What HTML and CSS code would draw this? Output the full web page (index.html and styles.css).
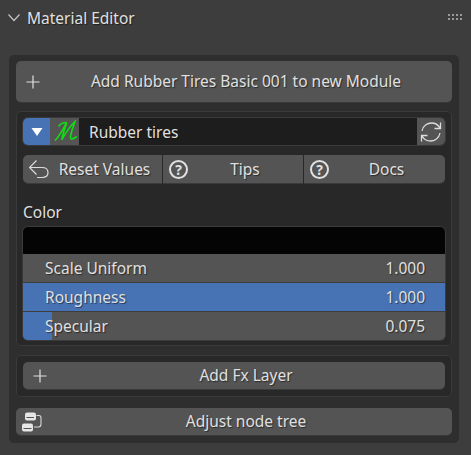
FILE: index.html
```html
<!DOCTYPE html>
<html lang="en">
<head>
    <meta charset="UTF-8">
    <title>Material Editor</title>
    <link rel="stylesheet" href="styles.css">
</head>
<body>
    <div class="panel">
        <div class="panel-header">
            <svg class="chevron" width="14" height="10" viewBox="0 0 14 10"><path d="M1.5 1.5 L7 7.5 L12.5 1.5" fill="none" stroke="#c4c4c4" stroke-width="1.2"/></svg>
            <span class="panel-title">Material Editor</span>
            <span class="grip"></span>
        </div>

        <div class="panel-body">
            <button class="btn btn-large">
                <svg class="btn-icon plus" width="14" height="14" viewBox="0 0 14 14"><path d="M7 0.5 V13.5 M0.5 7 H13.5" stroke="#e0e0e0" stroke-width="1.2"/></svg>
                Add Rubber Tires Basic 001 to new Module
            </button>

            <div class="box box-main">
                <div class="name-row">
                    <span class="toggle"><svg width="12" height="8" viewBox="0 0 12 8"><path d="M0.5 0 H11.5 L6 8 Z" fill="#fff"/></svg></span>
                    <span class="mat-icon">
                        <svg width="26" height="24" viewBox="0 0 26 24"><path d="M3 20.500 C7 17 11 9 14.800 2.500 C13 8 10.500 14 9.800 19.800 C13 14 18 6 23 1.500 C21 8 18.500 13 18.500 17.500 C18.500 20 21.500 19 24.800 16.500 M6.500 6.500 C8 4 11 2.500 14.800 2.500" fill="none" stroke="#12dc12" stroke-width="1.600"/></svg>
                    </span>
                    <span class="name-field">Rubber tires</span>
                    <span class="refresh">
                        <svg width="22" height="22" viewBox="0 0 22 22"><path d="M2 10 C3 4 8 2 11.500 2 C15 2 18 3.500 20 7 M20.500 1.500 V7.500 H14.500 M20 12 C19 18 14 20 10.500 20 C7 20 4 18.500 2 15 M1.500 20.500 V14.500 H7.500" fill="none" stroke="#dcdcdc" stroke-width="1.300"/></svg>
                    </span>
                </div>

                <div class="btn-row">
                    <button class="btn seg">
                        <svg class="reset-icon" width="20" height="20" viewBox="0 0 20 20"><path d="M7.500 1.500 L0.500 8.500 L7.500 15.500 M0.500 8.500 H13 C17 8.500 19 10.500 19 13.500 C19 16.500 17 18.500 13 18.500 H8" fill="none" stroke="#dcdcdc" stroke-width="1.200"/></svg>
                        Reset Values
                    </button>
                    <button class="btn seg">
                        <span class="help">?</span>
                        Tips
                    </button>
                    <button class="btn seg">
                        <span class="help">?</span>
                        Docs
                    </button>
                </div>

                <div class="color-label">Color</div>

                <div class="props">
                    <div class="swatch"></div>
                    <div class="slider">
                        <span>Scale Uniform</span><span>1.000</span>
                    </div>
                    <div class="slider slider-full">
                        <span>Roughness</span><span>1.000</span>
                    </div>
                    <div class="slider slider-part">
                        <span class="slider-fill" style="width: 6.9%"></span>
                        <span>Specular</span><span>0.075</span>
                    </div>
                </div>
            </div>

            <div class="box box-fx">
                <button class="btn btn-small">
                    <svg class="btn-icon plus" width="14" height="14" viewBox="0 0 14 14"><path d="M7 0.5 V13.5 M0.5 7 H13.5" stroke="#e0e0e0" stroke-width="1.2"/></svg>
                    Add Fx Layer
                </button>
            </div>

            <button class="btn btn-small btn-adjust">
                <svg class="btn-icon tree" width="20" height="20" viewBox="0 0 20 20">
                    <rect x="3" y="0.500" width="11" height="8" rx="2" fill="#e6e6e6"/>
                    <rect x="0" y="11.500" width="11" height="8" rx="2" fill="#e6e6e6"/>
                    <path d="M4.500 5.500 H12 M1.500 16.500 H9.500" stroke="#545454" stroke-width="1"/>
                    <path d="M14.500 3.500 H17 C18.500 3.500 19 4.500 19 6 V12 C19 14 18 15 16.500 15 H12" fill="none" stroke="#d8d8d8" stroke-width="1.100"/>
                </svg>
                Adjust node tree
            </button>
        </div>
    </div>
</body>
</html>
```

FILE: styles.css
```css
* {
    box-sizing: border-box;
}

body {
    margin: 0;
    width: 471px;
    height: 455px;
    overflow: hidden;
    background-color: #3d3d3d;
    font-family: "Noto Sans", sans-serif;
    font-size: 15.500px;
    color: #e0e0e0;
    text-shadow: 1px 1px 1px rgba(0, 0, 0, 0.5);
}

.panel-header {
    display: flex;
    align-items: center;
    height: 35px;
    padding: 0 9px 0 7px;
}

.chevron {
    margin-right: 6px;
}

.panel-title {
    flex: 1;
}

.grip {
    width: 14px;
    height: 6px;
    margin-top: -1px;
    background-image: conic-gradient(#9a9a9a 25%, transparent 0);
    background-position: -2px 0;
    background-size: 4px 4px;
}

.panel-body {
    display: flex;
    flex-direction: column;
    width: 450px;
    height: 388px;
    margin: 20px 0 0 9px;
    padding: 6px 7px;
    background-color: #2e2e2e;
    border-radius: 5px;
}

.btn {
    position: relative;
    display: flex;
    align-items: center;
    justify-content: center;
    width: 100%;
    padding: 0 0 1px 24px;
    border: none;
    border-radius: 5px;
    background-color: #545454;
    font: inherit;
    color: inherit;
    text-shadow: inherit;
    box-shadow: 0 1px 0 #3a3a3a;
}

.btn-large {
    height: 41px;
}

.btn-small {
    height: 27px;
}

.btn-icon {
    position: absolute;
    left: 10px;
    top: 50%;
    transform: translateY(-50%);
}

.box {
    background-color: #282828;
    border: 1px solid #3a3a3a;
    border-radius: 5px;
    padding: 6px;
}

.box-main {
    height: 235px;
    margin-top: 9px;
}

.box-fx {
    height: 42px;
    margin-top: 9px;
}

.btn-adjust {
    margin-top: 11px;
}

.btn-adjust .tree {
    left: 6px;
}

.name-row {
    display: flex;
    height: 27px;
    border-radius: 5px;
    box-shadow: 0 0 0 1px #3a3a3a;
}

.toggle {
    display: flex;
    align-items: center;
    justify-content: center;
    width: 27px;
    background-color: #4772b3;
    border-radius: 5px 0 0 5px;
}

.mat-icon {
    display: flex;
    align-items: center;
    justify-content: center;
    width: 29px;
    background-color: #545454;
}

.name-field {
    flex: 1;
    display: flex;
    align-items: center;
    padding-left: 10px;
    background-color: #1d1d1d;
}

.refresh {
    display: flex;
    align-items: center;
    justify-content: center;
    width: 28px;
    background-color: #545454;
    border-radius: 0 5px 5px 0;
}

.btn-row {
    display: flex;
    gap: 1px;
    height: 28px;
    margin-top: 10px;
}

.seg {
    flex: 0 0 140px;
    height: 28px;
    padding-bottom: 0;
    border-radius: 0;
}

.seg:first-child {
    flex-basis: 139px;
    border-radius: 5px 0 0 5px;
}

.seg:last-child {
    flex-basis: 141px;
    border-radius: 0 5px 5px 0;
}

.reset-icon {
    position: absolute;
    left: 6px;
    top: 4px;
}

.help {
    position: absolute;
    left: 6px;
    top: 5px;
    width: 19px;
    height: 19px;
    border: 2px solid #e0e0e0;
    border-radius: 50%;
    font-size: 14px;
    font-weight: bold;
    line-height: 15px;
    text-align: center;
    text-shadow: none;
}

.color-label {
    height: 24px;
    margin-top: 18px;
    margin-bottom: 2px;
}

.props {
    border-radius: 5px;
    overflow: hidden;
    background-color: #3d3d3d;
    box-shadow: 0 0 0 1px #3a3a3a;
}

.swatch {
    height: 27px;
    background-color: #040404;
}

.slider {
    position: relative;
    display: flex;
    justify-content: space-between;
    align-items: center;
    height: 28px;
    margin-bottom: 1px;
    padding: 0 20px 0 22px;
    background-color: #545454;
}

.slider:last-child {
    margin-bottom: 0;
}

.slider span {
    position: relative;
}

.slider-full {
    background-color: #4772b3;
}

.slider .slider-fill {
    position: absolute;
    left: 0;
    top: 0;
    bottom: 0;
    background-color: #4772b3;
}
```
